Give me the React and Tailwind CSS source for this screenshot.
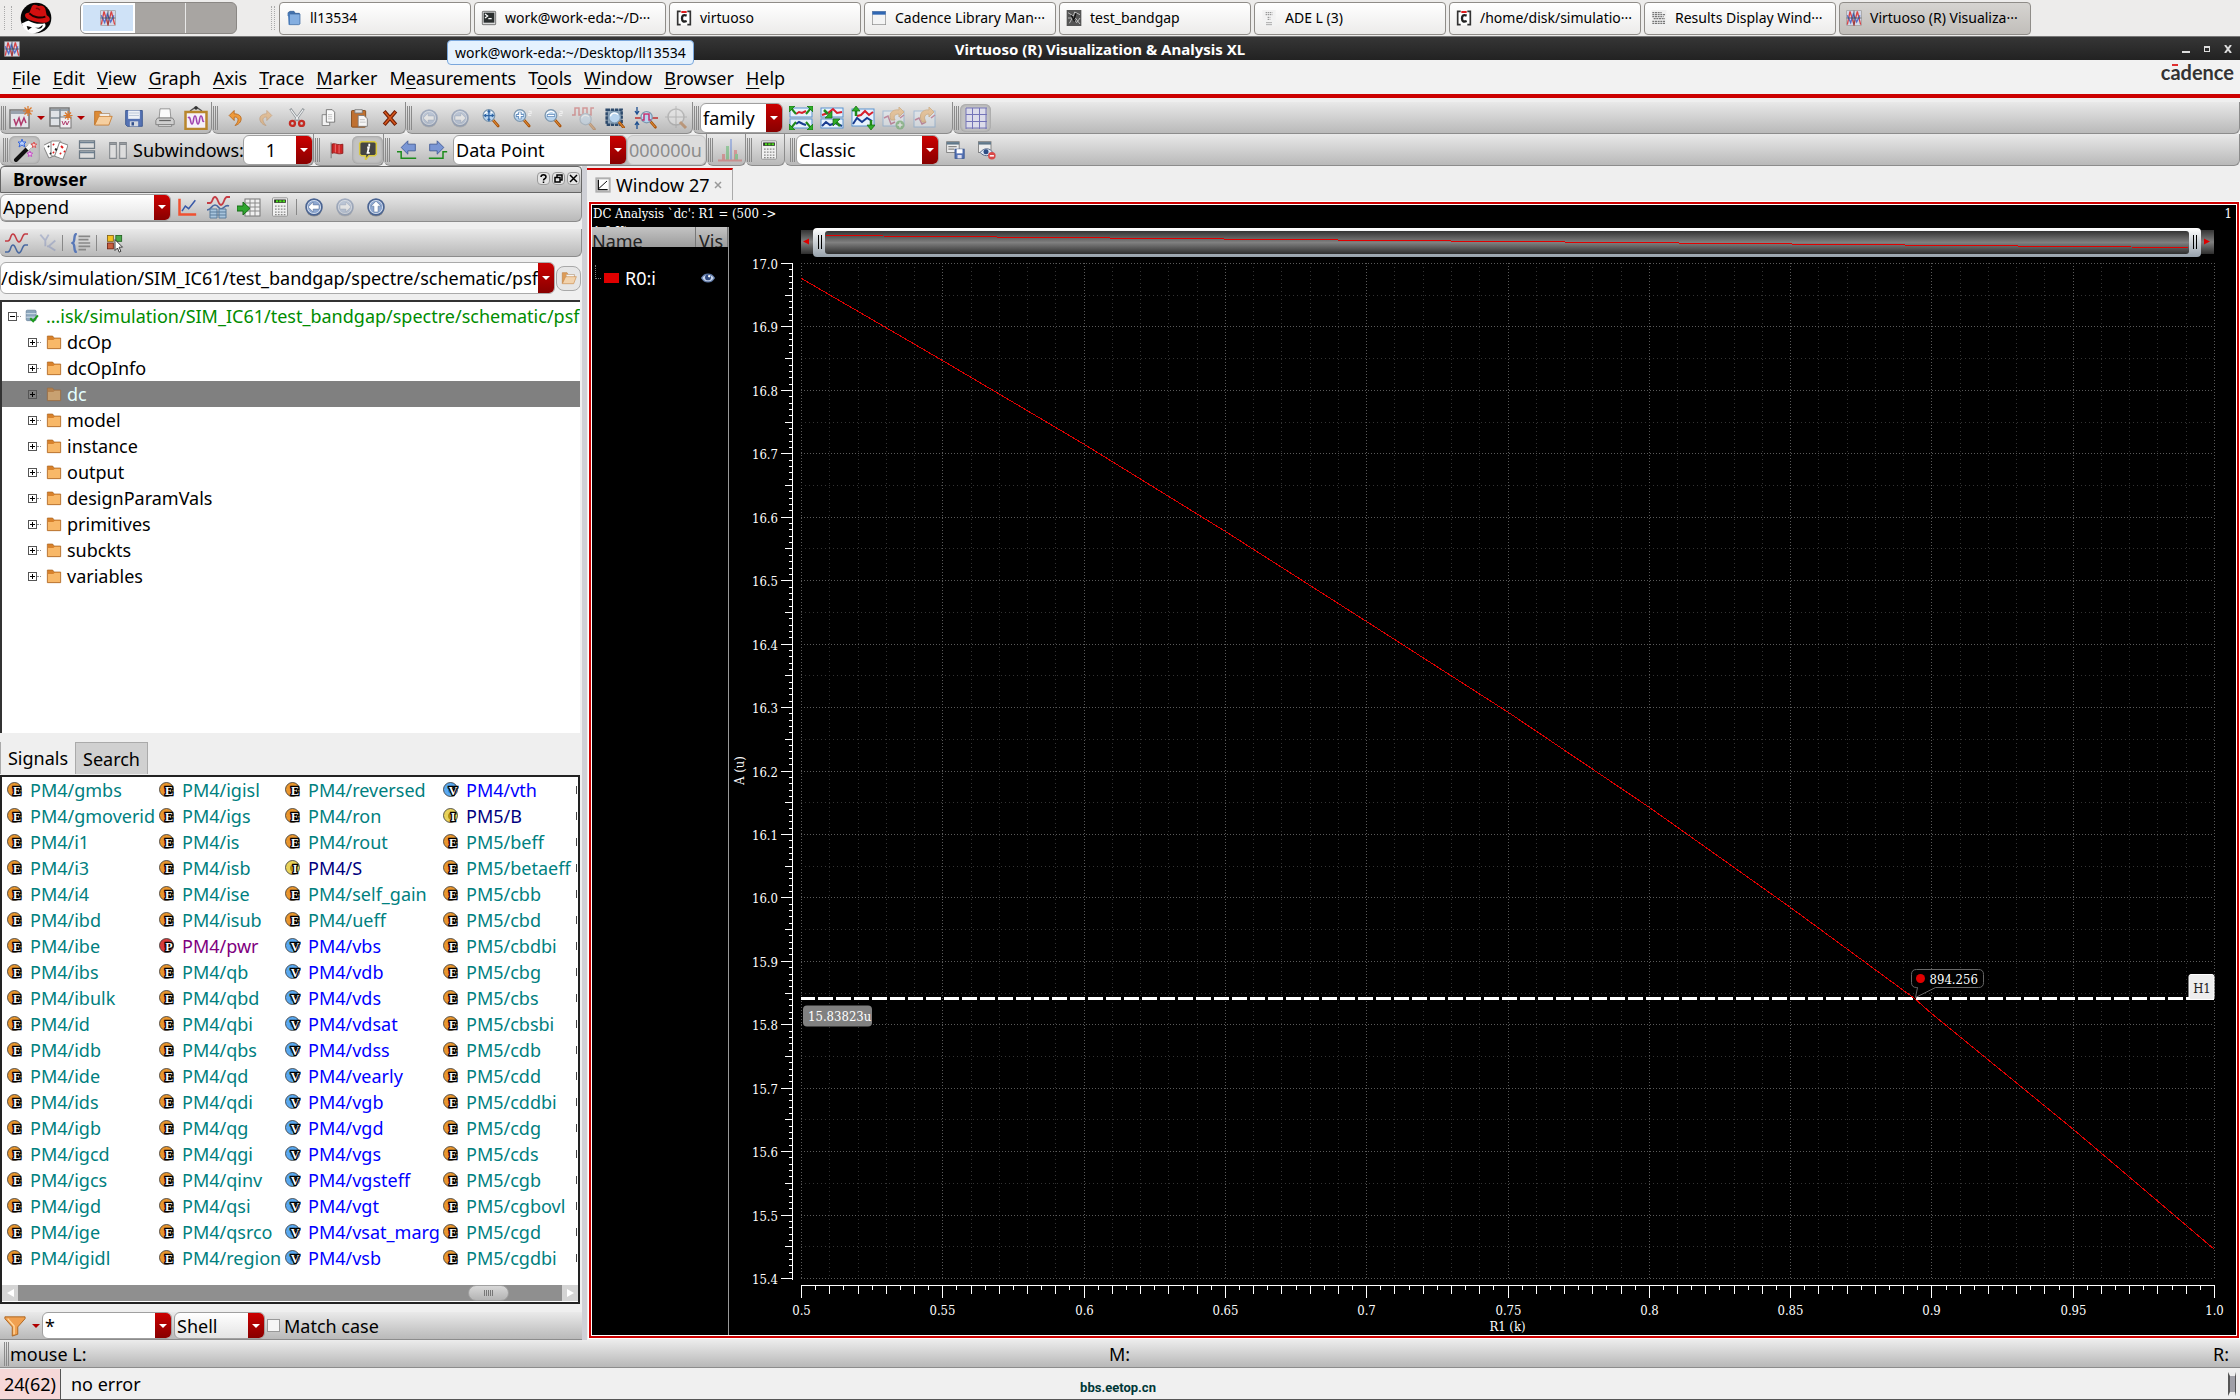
import React, { useEffect, useRef, useState } from 'react';

const tasks = [
  { label: 'll13534', icon: 'folderBlue' },
  { label: 'work@work-eda:~/D···', icon: 'terminal' },
  { label: 'virtuoso', icon: 'cad' },
  { label: 'Cadence Library Man···', icon: 'window' },
  { label: 'test_bandgap', icon: 'schematic' },
  { label: 'ADE L (3)', icon: 'ade' },
  { label: '/home/disk/simulatio···', icon: 'cad' },
  { label: 'Results Display Wind···', icon: 'results' },
  { label: 'Virtuoso (R) Visualiza···', icon: 'waves', active: true },
];

const menus = [
  ['', 'F', 'ile'],
  ['', 'E', 'dit'],
  ['', 'V', 'iew'],
  ['', 'G', 'raph'],
  ['', 'A', 'xis'],
  ['', 'T', 'race'],
  ['', 'M', 'arker'],
  ['M', 'e', 'asurements'],
  ['T', 'o', 'ols'],
  ['', 'W', 'indow'],
  ['', 'B', 'rowser'],
  ['', 'H', 'elp'],
];

const folders = ['dcOp', 'dcOpInfo', 'dc', 'model', 'instance', 'output', 'designParamVals', 'primitives', 'subckts', 'variables'];

const signalColumns = [
  'E:PM4/gmbs E:PM4/gmoverid E:PM4/i1 E:PM4/i3 E:PM4/i4 E:PM4/ibd E:PM4/ibe E:PM4/ibs E:PM4/ibulk E:PM4/id E:PM4/idb E:PM4/ide E:PM4/ids E:PM4/igb E:PM4/igcd E:PM4/igcs E:PM4/igd E:PM4/ige E:PM4/igidl',
  'E:PM4/igisl E:PM4/igs E:PM4/is E:PM4/isb E:PM4/ise E:PM4/isub P:PM4/pwr E:PM4/qb E:PM4/qbd E:PM4/qbi E:PM4/qbs E:PM4/qd E:PM4/qdi E:PM4/qg E:PM4/qgi E:PM4/qinv E:PM4/qsi E:PM4/qsrco E:PM4/region',
  'E:PM4/reversed E:PM4/ron E:PM4/rout I:PM4/S E:PM4/self_gain E:PM4/ueff V:PM4/vbs V:PM4/vdb V:PM4/vds V:PM4/vdsat V:PM4/vdss V:PM4/vearly V:PM4/vgb V:PM4/vgd V:PM4/vgs V:PM4/vgsteff V:PM4/vgt V:PM4/vsat_marg V:PM4/vsb',
  'V:PM4/vth I:PM5/B E:PM5/beff E:PM5/betaeff E:PM5/cbb E:PM5/cbd E:PM5/cbdbi E:PM5/cbg E:PM5/cbs E:PM5/cbsbi E:PM5/cdb E:PM5/cdd E:PM5/cddbi E:PM5/cdg E:PM5/cds E:PM5/cgb E:PM5/cgbovl E:PM5/cgd E:PM5/cgdbi',
].map((column) => column.split(' ').map((item) => item.split(':')));

const signalStyles = {
  E: { text: 'text-[#008080]', ball: '#e8962e', core: '#b8330a' },
  V: { text: 'text-[#0000ff]', ball: '#5aa9f0', core: '#2878d0' },
  I: { text: 'text-[#000080]', ball: '#e8d25a', core: '#b09010' },
  P: { text: 'text-[#800080]', ball: '#d83c3c', core: '#8c0c0c' },
};

// R0:i trace, R1 in k against current in uA
const trace = [
  [0.5, 16.976], [0.55, 16.847], [0.6, 16.714], [0.65, 16.578], [0.7, 16.436], [0.75, 16.292],
  [0.8, 16.143], [0.85, 15.985], [0.894, 15.841], [0.9, 15.818], [0.95, 15.635], [1.0, 15.446],
];

const magnifier = (
  <>
    <path d="M14 14l6.500 7.500" stroke="#a8520c" strokeWidth="3.500" strokeLinecap="round" />
    <path d="M14.500 14.500l5.500 6.500" stroke="#e89a40" strokeWidth="1.200" strokeLinecap="round" />
    <circle cx="9.500" cy="9" r="7" fill="#b8d4ee" stroke="#7d97ae" strokeWidth="1.500" />
    <path d="M4.500 8a5 4.500 0 0 1 9-2" stroke="#fff" strokeWidth="1.500" />
  </>
);

const plots = (
  <>
    <rect x="1" y="2" width="22" height="9" fill="#e8f2fc" stroke="#5b93d0" />
    <rect x="1" y="13" width="22" height="9" fill="#e8f2fc" stroke="#5b93d0" />
  </>
);

const circleArrow = (d) => (
  <>
    <ellipse cx="12" cy="13.500" rx="10" ry="10" fill="#333" opacity=".35" />
    <circle cx="12" cy="12" r="9.500" fill="#dde6f4" stroke="#4a6492" strokeWidth="2" />
    <circle cx="12" cy="12" r="7.500" fill="#8fa8d0" />
    <path d={d} fill="#fff" stroke="#51698f" strokeWidth=".6" />
  </>
);

const leftArrow = 'M5 12l6-6v3.500h7v5h-7V18z';
const rightArrow = 'M19 12l-6-6v3.500H6v5h7V18z';
const upArrow = 'M12 5l6 6h-3.500v7h-5v-7H6z';

const icons = {
  folderBlue: (
    <>
      <path d="M3 4l3-2h6l2 3h6v4H3z" fill="#4372ad" stroke="#2f5a92" />
      <path d="M5 6h16v15l-2 1H5z" fill="#84aee0" stroke="#33619c" />
      <path d="M3 5h3v17H4z" fill="#4b7cba" />
    </>
  ),
  terminal: (
    <>
      <rect x="2" y="2" width="20" height="20" rx="1" fill="#ddd" stroke="#444" />
      <rect x="4" y="4" width="16" height="15" fill="#2c3030" />
      <path d="M6 6l4 3-4 3M11 13h5" stroke="#fff" strokeWidth="1.800" />
    </>
  ),
  cad: (
    <>
      <rect x="4" y="2" width="16" height="20" fill="#fff" />
      <path d="M7 2H2.500v20H7M17 2h4.500v20H17" stroke="#333" strokeWidth="2.500" />
      <path d="M8 3h8" stroke="#e02020" strokeWidth="3" />
      <path d="M16 8.500c-5-2-7 0-7 4s2 6 7 4" stroke="#222" strokeWidth="3.500" />
    </>
  ),
  window: (
    <>
      <rect x="2" y="2" width="20" height="20" fill="#f4f4f4" stroke="#888" />
      <rect x="2" y="2" width="20" height="5" fill="#3067b3" />
    </>
  ),
  schematic: (
    <>
      <rect x="1" y="0" width="22" height="24" fill="#555" />
      <path d="M3 4l8 5 2-6 8 4M5 20l5-9 6 8 5-7M3 12h6M14 12l7 9" stroke="#bbb" strokeWidth="1.500" />
      <path d="M8 8l5 9M15 5l-3 9" stroke="#111" strokeWidth="2" />
    </>
  ),
  ade: (
    <>
      <rect x="2" y="0" width="20" height="24" fill="#f2f2f2" />
      <path d="M7 4h10M7 7h10M10 11h4M10 14h4M8 19h8M8 22h8" stroke="#888" strokeWidth="1.500" strokeDasharray="2 1" />
    </>
  ),
  results: (
    <>
      <rect x="1" y="0" width="22" height="24" fill="#f0f0f0" />
      <path d="M2 4h14M2 7h19M2 10h17M4 13h17M2 17h20M2 20h19" stroke="#777" strokeWidth="1.700" strokeDasharray="3 1" />
    </>
  ),
  waves: (
    <>
      <rect x="1" y="1" width="22" height="22" fill="#d4d9e8" stroke="#999" />
      <path d="M2 22l4-20 6 20 5-20 5 20" stroke="#d84444" strokeWidth="2" />
      <path d="M2 8l5 11 4-13 5 12 5-10" stroke="#5470c8" strokeWidth="2" />
      <path d="M12 1v22M1 12h22" stroke="#333" />
    </>
  ),
  newPlot: (
    <>
      <rect x="1" y="4" width="19" height="18" fill="#e4e6ea" stroke="#777" strokeWidth="1.500" />
      <path d="M2 6.500h17" stroke="#9aa3ae" strokeWidth="3" />
      <path d="M5 13l2 6 3-7 2 7 3-7 2 5" stroke="#b03a6c" strokeWidth="1.500" />
      <path d="M19 0v10M14 5h10M15.500 1.500l7 7M22.500 1.500l-7 7" stroke="#d9772a" strokeWidth="1.200" />
    </>
  ),
  newSub: (
    <>
      <rect x="1" y="2" width="19" height="18" fill="#dfe2e6" stroke="#777" strokeWidth="1.500" />
      <path d="M1 4h19M1 12h11M11 3v17" stroke="#808a94" strokeWidth="1.600" />
      <rect x="11" y="11" width="11" height="11" fill="#f2eef2" stroke="#777" />
      <path d="M13 15l1.500 4 2-4 1.500 4 2-4" stroke="#b03a6c" />
      <path d="M19 5v9M14.500 9.500h9M16 6.500l6 6M22 6.500l-6 6" stroke="#d9772a" strokeWidth="1.200" />
    </>
  ),
  open: (
    <>
      <path d="M2 20V4h7l2 3h9v4H8z" fill="#dd8a34" stroke="#b86a1e" />
      <path d="M8 7h12v8H8z" fill="#fff" stroke="#999" strokeWidth=".6" />
      <path d="M2 20.500L7 10h16l-4 10.500z" fill="#f6cfa0" stroke="#c67a2c" />
    </>
  ),
  save: (
    <>
      <path d="M2 3h20v19H4l-2-2z" fill="#5673b4" stroke="#33508c" />
      <rect x="5" y="3" width="14" height="10" fill="#eef1f6" />
      <path d="M6 6h12M6 9h12" stroke="#b5c0d4" />
      <rect x="7" y="16" width="10" height="6" fill="#d4d8e0" />
      <rect x="9" y="17" width="3" height="4" fill="#33508c" />
    </>
  ),
  print: (
    <>
      <path d="M6 1h12l1 11H5z" fill="#fafafa" stroke="#888" />
      <path d="M3 12h18l2 3v5H1v-5z" fill="#cfcfcf" stroke="#777" />
      <path d="M4 20h16v2H4z" fill="#eee" stroke="#777" />
      <path d="M5 15h14" stroke="#666" strokeWidth="1.500" />
    </>
  ),
  frame: (
    <>
      <path d="M6 5l6-4 6 4" stroke="#555" strokeWidth="1.500" />
      <circle cx="12" cy="2" r="1.800" fill="#333" />
      <rect x="1.500" y="6" width="21" height="17" fill="#f6f0f8" stroke="#b8862c" strokeWidth="2.500" />
      <path d="M4 12c3-3 2 6 4 6s1-8 3-8 1 8 3 8 1-8 3-8 1 7 3 5" stroke="#a044b0" strokeWidth="1.600" />
    </>
  ),
  undo: <path d="M11 3L5 9l6 6v-4c6-1 6 5 1 10 9-2 11-14-1-14z" fill="#ee9a3c" stroke="#b4651a" />,
  redo: <path d="M13 3l6 6-6 6v-4c-6-1-6 5-1 10-9-2-11-14 1-14z" fill="#ee9a3c" stroke="#b4651a" />,
  cut: (
    <>
      <path d="M4 1l10 14M20 1L10 15" stroke="#8a9094" strokeWidth="3" />
      <path d="M4.500 2l9 12M19.500 2l-9 12" stroke="#f0f2f4" strokeWidth="1.300" />
      <circle cx="6.500" cy="18.500" r="3" stroke="#c42c24" strokeWidth="2.800" />
      <circle cx="17.500" cy="18.500" r="3" stroke="#c42c24" strokeWidth="2.800" />
    </>
  ),
  copy: (
    <>
      <path d="M5 8h9v13H5z" fill="#f2f2f2" stroke="#777" />
      <path d="M10 2h7l3 3v12H10z" fill="#fafafa" stroke="#666" />
      <path d="M12 8h5M12 10.500h5M12 13h5" stroke="#bbb" />
    </>
  ),
  paste: (
    <>
      <rect x="3" y="3" width="17" height="20" rx="1" fill="#bf7030" stroke="#7d4312" />
      <path d="M7 6V2h9v4z" fill="#ddd" stroke="#777" />
      <path d="M11 9h7l4 4v9H11z" fill="#f6f6f6" stroke="#777" />
      <path d="M13 14h6M13 17h7" stroke="#bbb" />
    </>
  ),
  remove: (
    <>
      <path d="M5 4l14 16M19 4L5 20" stroke="#6e1c04" strokeWidth="4.500" />
      <path d="M5.500 4.500l13 15M18.500 4.500l-13 15" stroke="#d4561c" strokeWidth="2" />
    </>
  ),
  back: circleArrow(leftArrow),
  forward: circleArrow(rightArrow),
  up: circleArrow(upArrow),
  zoomFit: (
    <>
      {magnifier}
      <path d="M9.500 3.500v11M4 9h11M8 5l1.500-2L11 5M8 13l1.500 2 1.500-2M6 7.500L4 9l2 1.500M13 7.500L15 9l-2 1.500" stroke="#2e64a4" strokeWidth="1.500" />
    </>
  ),
  zoomIn: (
    <>
      {magnifier}
      <path d="M9.500 4.500v9M5 9h9" stroke="#3c6ea8" strokeWidth="3.500" />
      <path d="M9.500 5v8M5.500 9h8" stroke="#fff" strokeWidth="2" />
      <path d="M20 4h3v2.500h-3V9h3" stroke="#eee" strokeWidth="1.300" />
    </>
  ),
  zoomOut: (
    <>
      {magnifier}
      <path d="M5 9h9" stroke="#3c6ea8" strokeWidth="3.500" />
      <path d="M5.500 9h8" stroke="#fff" strokeWidth="2" />
      <path d="M20 4h3v2.500h-3V9h3" stroke="#eee" strokeWidth="1.300" />
    </>
  ),
  zoomWave: (
    <>
      <path d="M0 9h3V2h4v7h4V2h4v7h4V2h3" stroke="#c03030" strokeWidth="1.500" />
      <g transform="translate(6 6) scale(.8)">{magnifier}</g>
    </>
  ),
  zoomArea: (
    <>
      <rect x="2" y="2" width="18" height="18" fill="#8fa4b8" stroke="#2d4a6c" strokeWidth="3" strokeDasharray="4 1" />
      <g transform="translate(2 2)">{magnifier}</g>
    </>
  ),
  zoomTrace: (
    <>
      <path d="M3 1v7M3 23v-7M1 5l2 3 2-3M1 19l2-3 2 3" stroke="#1d4f90" strokeWidth="1.300" />
      <path d="M1 12h7M18 12h6" stroke="#c03030" strokeWidth="1.500" />
      <g transform="translate(5 4) scale(.8)">{magnifier}</g>
      <path d="M8 14h2V8h5v6h2" stroke="#c03070" strokeWidth="1.500" />
    </>
  ),
  zoomTarget: (
    <>
      <circle cx="11" cy="11" r="8" fill="#eee" stroke="#888" strokeWidth="1.500" />
      <path d="M11 0v22M0 11h22" stroke="#888" />
      <path d="M15 16l6 6" stroke="#a8520c" strokeWidth="3" />
    </>
  ),
  expandPlots: (
    <>
      {plots}
      <path d="M7 8l3-2 3 1 4-2" stroke="#d8202c" strokeWidth="2" />
      <path d="M7 18l3-2 4 2 3 1" stroke="#183c90" strokeWidth="2" />
      <path d="M2 2l5 6M22 2l-5 6M2 22l5-6M22 22l-5-6" stroke="#1f8a1a" strokeWidth="2" />
      <path d="M0 0h6L0 6zM24 0h-6l6 6zM0 24h6l-6-6zM24 24h-6l6-6z" fill="#2fae28" stroke="#146c10" strokeWidth=".7" />
    </>
  ),
  shrinkPlots: (
    <>
      {plots}
      <path d="M2 9l6-2 5-4 4 4 5-1" stroke="#d8202c" strokeWidth="2" />
      <path d="M2 20l4-4 4 3 5-2 7 3" stroke="#183c90" strokeWidth="2" />
      <path d="M4 4l4 4M20 20l-4-4" stroke="#1f8a1a" strokeWidth="2.500" />
      <path d="M12 12H5l7-7zM13 13h7l-7 7z" fill="#2fae28" stroke="#146c10" strokeWidth=".7" />
    </>
  ),
  spreadPlots: (
    <>
      <rect x="1" y="3" width="22" height="17" fill="#e8f2fc" stroke="#5b93d0" />
      <path d="M6 10l4-1 4-4 4 4 4-3" stroke="#d8202c" strokeWidth="2" />
      <path d="M2 18l4-6 5 4 5-4 5 3" stroke="#183c90" strokeWidth="2" />
      <path d="M5 10V3M20 14v7" stroke="#1f8a1a" strokeWidth="2.500" />
      <path d="M5 0l4 5H1zM20 24l4-5h-8z" fill="#2fae28" stroke="#146c10" strokeWidth=".7" />
    </>
  ),
  reloadAdd: (
    <>
      <rect x="1" y="5" width="21" height="15" fill="#e8f2fc" stroke="#5b93d0" />
      <path d="M2 12l4-2 3 8 4-2M18 12l4-3" stroke="#a02050" strokeWidth="1.500" />
      <path d="M9 14c-3-6 1-11 8-10V1l5 5-5 5V8c-4 0-6 2-4 6z" fill="#f0a040" stroke="#c07820" />
      <circle cx="18" cy="19" r="4.500" fill="#3f9a3a" />
      <path d="M18 16.500v5M15.500 19h5" stroke="#fff" strokeWidth="1.500" />
    </>
  ),
  reload: (
    <>
      <rect x="1" y="5" width="21" height="16" fill="#e8f2fc" stroke="#5b93d0" />
      <path d="M2 14l4-2 3 6 4-2M18 12l4-3" stroke="#a02050" strokeWidth="1.500" />
      <path d="M9 16c-4-7 0-13 7-12V1l5 5-5 5V8c-4 0-6 3-3 8z" fill="#f0a040" stroke="#c07820" />
    </>
  ),
  grid: (
    <>
      <rect x="2" y="2" width="20" height="20" fill="#dcdcea" />
      <path d="M2 2v21M8.500 2v21M15.500 2v21M22 2v21M2 2h21M2 8.500h21M2 15.500h21M2 22h21" stroke="#7474b8" />
    </>
  ),
  wand: (
    <>
      <path d="M3 22L16 9" stroke="#111" strokeWidth="4" strokeLinecap="round" />
      <path d="M14 11l4-4" stroke="#f4f4f4" strokeWidth="4" />
      <path d="M9 1l1 3h3l-2 2 1 3-3-2-3 2 1-3-2-2h3z" fill="#b8d0ff" stroke="#3a68d8" />
      <path d="M21 4l.7 2h2l-1.500 1.500.5 2-1.700-1-1.700 1 .5-2L18 6h2z" fill="#ffd0d0" stroke="#d83838" strokeWidth=".8" />
      <path d="M17 13l.7 2h2l-1.500 1.500.5 2-1.700-1-1.700 1 .5-2L14 15h2z" fill="#f8c8f8" stroke="#c038c0" strokeWidth=".8" />
    </>
  ),
  cards: (
    <>
      <rect x="2" y="5" width="9" height="14" rx="1" fill="#fff" stroke="#888" transform="rotate(-25 6 13)" />
      <rect x="7" y="3" width="10" height="15" rx="1" fill="#fff" stroke="#888" />
      <rect x="13" y="5" width="9" height="15" rx="1" fill="#fff" stroke="#888" transform="rotate(20 17 12)" />
      <path d="M4 8l1 1M11 11l2 1M6 15l1 1" stroke="#222" strokeWidth="2" />
      <path d="M9 6l1 1M17 8l2 2M16 15l1 1M20 13l1 1M9 14l1 1" stroke="#e02020" strokeWidth="2" />
    </>
  ),
  rows: (
    <>
      <path d="M3 1h18v9H3zM3 13h18v9H3z" fill="#ddd" stroke="#6e7a84" strokeWidth="1.500" />
      <path d="M3 3h18M3 15h18" stroke="#6d7f90" strokeWidth="2" />
    </>
  ),
  columns: (
    <>
      <path d="M2 3h8v19H2zM14 3h8v19h-8z" fill="#ddd" stroke="#84898e" strokeWidth="1.300" />
      <path d="M2 5h8M14 5h8" stroke="#84898e" strokeWidth="2" />
    </>
  ),
  flag: (
    <>
      <path d="M5 3v19" stroke="#888" strokeWidth="1.500" />
      <path d="M6 5c4-2 6 2 13 0v11c-7 2-9-2-13 0z" fill="#cc2626" stroke="#8c1212" />
      <path d="M10 5v10M14.500 6v10" stroke="#f08080" />
    </>
  ),
  info: (
    <>
      <path d="M4 2h16l2 2v13l-2 2h-7l-4 5v-5H4l-2-2V4z" fill="#444" stroke="#d8c840" strokeWidth="1.800" />
      <path d="M13.500 4.500v3M11 9h2l-1.500 6.500H14" stroke="#fff" strokeWidth="2.200" />
    </>
  ),
  prevEdge: (
    <>
      <path d="M5 9l8-8v4h9v8h-9v4z" fill="#7a96d4" stroke="#3c5794" />
      <path d="M0 14h5v8h18" stroke="#1c8c1c" strokeWidth="1.800" />
    </>
  ),
  nextEdge: (
    <>
      <path d="M19 9l-8-8v4H2v8h9v4z" fill="#7a96d4" stroke="#3c5794" />
      <path d="M1 22h17v-8h5" stroke="#1c8c1c" strokeWidth="1.800" />
    </>
  ),
  histogram: (
    <>
      <path d="M4 22v-6h3v6zM16 22V12h3v10z" fill="#d84848" />
      <path d="M8 22V8h3v14zM17 22v-6h3v6z" fill="#38b048" />
      <path d="M12 22V1h2v21z" fill="#5078d8" />
      <path d="M0 22.500h24" stroke="#d84848" strokeWidth="2" />
    </>
  ),
  calculator: (
    <>
      <rect x="3" y="1" width="18" height="22" rx="1" fill="#f0f0f0" stroke="#888" />
      <rect x="5" y="3" width="14" height="4" fill="#222" />
      <path d="M7 5h11" stroke="#4be01a" strokeWidth="2.500" strokeDasharray="3 1" />
      <path d="M6 11h13M6 14.500h13M6 18h13M6 21h13" stroke="#888" strokeWidth="1.500" strokeDasharray="2 1.500" />
    </>
  ),
  saveView: (
    <>
      <rect x="2" y="2" width="15" height="13" fill="#eee" stroke="#777" />
      <path d="M2 4h15" stroke="#60788a" strokeWidth="3" />
      <path d="M4 8h10M4 11h7" stroke="#888" strokeWidth="1.500" />
      <rect x="12" y="11" width="11" height="11" fill="#5673b4" stroke="#33508c" />
      <rect x="14" y="11" width="7" height="5" fill="#fff" />
      <rect x="15" y="18" width="5" height="4" fill="#dde" />
    </>
  ),
  hideView: (
    <>
      <rect x="3" y="2" width="15" height="13" fill="#eee" stroke="#777" />
      <path d="M3 4h15" stroke="#60788a" strokeWidth="3" />
      <path d="M5 15c4-6 12-6 15 0-4 5-11 5-15 0z" fill="#dfe8f4" stroke="#445a7c" />
      <circle cx="12" cy="14" r="3" fill="#2c4c84" />
      <circle cx="19" cy="19" r="4.500" fill="#d84848" />
      <path d="M16.500 19h5" stroke="#fff" strokeWidth="1.800" />
    </>
  ),
  lineChart: (
    <>
      <path d="M3 2v19h20" stroke="#f05030" strokeWidth="3" />
      <path d="M6 17l4-6 4 3 8-10" stroke="#3858a8" strokeWidth="1.800" />
    </>
  ),
  waveData: (
    <>
      <path d="M1 8h3c3 0 2-6 5-6s3 8 6 8 3-8 6-8h3" stroke="#c43c44" strokeWidth="1.800" />
      <path d="M1 15c5 0 4-5 8-5s3 4 6 4 4-5 8-3" stroke="#4868a0" strokeWidth="1.600" />
      <path d="M4 14h7v9H4zM13 14h7v9h-7z" fill="#a8c4dc" stroke="#5b7c9c" />
      <path d="M4 17h16M4 20h16" stroke="#5b7c9c" />
    </>
  ),
  toTable: (
    <>
      <rect x="8" y="4" width="15" height="17" fill="#f0f0f0" stroke="#777" />
      <path d="M8 8h15M8 12h15M8 16h15M13 4v17M18 4v17" stroke="#8a8a8a" />
      <path d="M0 11h6V7l7 6.500L6 20v-4H0z" fill="#2fa52f" stroke="#166c16" />
    </>
  ),
  twoWaves: (
    <>
      <path d="M1 10h3c3 0 2-7 5-7s3 8 6 8 3-8 6-8h3" stroke="#c43c44" strokeWidth="1.500" />
      <path d="M1 21h3c3 0 2-7 5-7s3 8 6 8 3-8 6-8h3" stroke="#4868a0" strokeWidth="1.500" />
    </>
  ),
  branch: <path d="M4 2l6 7 4-7M10 9v7M22 9l-8 7 8 5M14 16h-2" stroke="#7484b8" strokeWidth="2.200" />,
  braces: (
    <>
      <path d="M7 1C2 1 6 10 2 12c4 2 0 11 5 11" stroke="#5878b8" strokeWidth="2.800" />
      <path d="M9 4h14M9 8h12M9 12h14M9 16h14M9 20h9" stroke="#888" strokeWidth="2" />
    </>
  ),
  pick: (
    <>
      <rect x="3" y="3" width="7" height="7" fill="#f4c020" stroke="#806010" />
      <rect x="13" y="3" width="7" height="7" fill="#48a848" stroke="#206020" />
      <rect x="3" y="12" width="7" height="7" fill="#c86040" stroke="#702010" />
      <path d="M12 8v13l3-3 2 5 2-1-2-5h4z" fill="#fff" stroke="#222" />
    </>
  ),
  funnel: (
    <>
      <path d="M1 2h22v2l-8 9v8l-6 2V13L1 4z" fill="#f0a050" stroke="#a8621c" />
      <path d="M4 4l7 8v9" stroke="#ffd8a0" strokeWidth="1.500" />
    </>
  ),
  folder: (
    <>
      <path d="M2 3h8l2 3h10v16H2z" fill="#d8822c" stroke="#a8601c" />
      <path d="M3 9h8l2-2h8v14H3z" fill="#f8b868" />
    </>
  ),
  database: (
    <>
      <rect x="2" y="2" width="17" height="18" rx="2" fill="#8ba6bc" stroke="#54708a" />
      <path d="M2 8h17M2 14h17" stroke="#dce8f0" strokeWidth="1.500" />
      <path d="M9 16l5 5 8-10" stroke="#1c9a1c" strokeWidth="3.500" />
    </>
  ),
  eye: (
    <>
      <path d="M1 12c5-9 17-9 22 0-5 9-17 9-22 0z" fill="#c8d6ec" stroke="#5c76a4" strokeWidth="2" />
      <circle cx="12" cy="11" r="5" fill="#304a80" />
      <circle cx="14" cy="9" r="2" fill="#fff" />
    </>
  ),
  graphWindow: (
    <>
      <rect x="2" y="2" width="20" height="20" fill="#fff" stroke="#b0b0b0" strokeWidth="3" />
      <path d="M5 4v15h14" stroke="#111" strokeWidth="2" />
      <path d="M6 17L18 6" stroke="#111" strokeWidth="1.500" />
    </>
  ),
  redhat: (
    <>
      <circle cx="12" cy="12" r="11.500" fill="#050505" />
      <path d="M1.500 16c2-1 4-2 5-2 3 2 8 3 12 2 1 1 1 3-1 4-3 3-8 4-10 3-3-1-6-4-6-7z" fill="#fff" />
      <path d="M5 18l4 1-3 2zM11 19c3 1 4 0 6-2 0 3-3 4-6 2z" fill="#050505" />
      <path d="M4 11c-1-3 2-3 3-3l2-5c2-2 4 0 5 0 2-1 4 0 5 2l1 5c4 2 3 6-3 5.500C12 15 5 13.500 4 11z" fill="#d20f0f" />
      <path d="M7 8.500c3 3 8 4 12 2.500" stroke="#1a0202" strokeWidth="1.500" />
      <path d="M12 5c1-1 2 0 3 1" stroke="#7a0606" />
    </>
  ),
};

function Icon({ name, className = 'size-6' }) {
  return (
    <svg viewBox="0 0 24 24" fill="none" className={`shrink-0 ${className}`} aria-hidden="true">
      {icons[name]}
    </svg>
  );
}

const Grip = () => (
  <span className="flex h-6 w-[7px] shrink-0 items-stretch justify-center gap-px">
    <i className="w-px bg-[#8a8a8a]" />
    <i className="w-px bg-[#8a8a8a]" />
    <i className="w-px bg-[#8a8a8a]" />
  </span>
);

const Group = ({ children, className = 'h-8' }) => (
  <div className={`flex items-center rounded-b-md border-r border-b border-[#8c8c8c] bg-linear-to-b from-[#e9e9e9] to-[#b9b9b9] ${className}`}>
    {children}
  </div>
);

const Tool = ({ icon, dim, pressed, large, width = 'w-[31px]' }) => (
  <button
    type="button"
    aria-label={icon}
    disabled={dim}
    className={`flex h-7 shrink-0 items-center justify-center rounded-md ${width} ${pressed ? 'bg-[#c2c2c2] shadow-[inset_0_0_3px_#8c8c8c]' : ''}`}
  >
    <Icon name={icon} className={`${large ? 'size-6' : 'size-5'} ${dim ? 'opacity-40' : ''}`} />
  </button>
);

const MenuArrow = () => (
  <button type="button" aria-label="More" className="flex h-7 w-3 shrink-0 items-center justify-center">
    <span className="border-x-4 border-t-4 border-x-transparent border-t-[#b00000]" />
  </button>
);

const RedArrow = () => (
  <span className="flex w-4 shrink-0 items-center justify-center bg-linear-to-b from-[#cc0000] to-[#880000]">
    <span className="border-x-4 border-t-4 border-x-transparent border-t-white" />
  </span>
);

const Combo = ({ value, label, className = '', center, plain }) => (
  <label className={`flex shrink-0 overflow-hidden rounded-md border border-[#a0a0a0] ${plain ? 'bg-linear-to-b from-white to-[#e4e4e4]' : 'bg-white'} ${className}`}>
    <select aria-label={label} className={`min-w-0 flex-1 appearance-none pl-0.5 outline-none ${center ? 'text-center' : ''}`}>
      <option>{value}</option>
    </select>
    <RedArrow />
  </label>
);

function Taskbar() {
  return (
    <nav className="flex h-9 items-center bg-[#edeceb] text-[14px]">
      <span className="ml-1 h-6 w-2 border-x border-dotted border-[#aaa]" />
      <button type="button" aria-label="Applications" className="mr-7 ml-2 flex w-8">
        <Icon name="redhat" className="size-8" />
      </button>
      <div className="flex h-8 w-[157px] overflow-hidden rounded-md border border-[#8a8784] bg-[#a8a5a2]">
        <button type="button" aria-label="Workspace 1" className="flex flex-1 items-center justify-center border-2 border-white bg-[#cfe2f7]">
          <Icon name="waves" className="size-4" />
        </button>
        <button type="button" aria-label="Workspace 2" className="flex-1 border-r border-[#e8e8e8]" />
        <button type="button" aria-label="Workspace 3" className="flex-1" />
      </div>
      <span className="mr-1 ml-[34px] h-6 w-1 border-x border-dotted border-[#aaa]" />
      <div className="flex gap-[3px]">
        {tasks.map((task) => (
          <button
            key={task.label}
            type="button"
            className={`flex h-[33px] w-48 items-center gap-2 rounded border border-[#8f8c88] pl-1.5 whitespace-nowrap ${
              task.active ? 'bg-linear-to-b from-[#d6d4d1] to-[#c1beba]' : 'bg-linear-to-b from-white to-[#ecebea]'
            }`}
          >
            <Icon name={task.icon} className="size-4" />
            {task.label}
          </button>
        ))}
      </div>
    </nav>
  );
}

function TitleBar() {
  return (
    <div className="relative flex h-6 items-center border-t border-[#777] bg-linear-to-b from-[#363636] to-[#222] text-white">
      <span className="flex w-6 justify-center">
        <Icon name="waves" className="size-4" />
      </span>
      <h1 className="flex-1 text-center text-[15px] leading-5 font-bold">Virtuoso (R) Visualization &amp; Analysis XL</h1>
      <div className="flex w-16 items-center gap-3.5 pl-[6px]">
        <button type="button" aria-label="Minimize" className="h-2 w-2 border-b-2 border-[#ddd]" />
        <button type="button" aria-label="Maximize" className="size-1.5 border border-t-2 border-[#ddd]" />
        <button type="button" aria-label="Close" className="flex">
          <svg viewBox="0 0 8 8" className="size-2">
            <path d="M1 0l6 8M7 0L1 8" stroke="#ddd" strokeWidth="2" />
          </svg>
        </button>
      </div>
      <div className="absolute top-[3px] left-[447px] z-10 flex h-[25px] items-center rounded border border-[#7aa7dc] bg-[#e5f2fe] px-[7px] text-[14px] text-black">
        work@work-eda:~/Desktop/ll13534
      </div>
    </div>
  );
}

function MenuBar() {
  return (
    <div className="flex h-[38px] items-start justify-between border-b-4 border-[#cc0000] bg-[#f2f2f2]">
      <div className="flex gap-3 pt-1.5 pl-3">
        {menus.map(([before, key, after]) => (
          <button key={key + after} type="button" className="leading-6">
            {before}
            <span className="underline underline-offset-3">{key}</span>
            {after}
          </button>
        ))}
      </div>
      <div className="pt-0.5 pr-[6px] font-['Lato',sans-serif] text-[20px] leading-5 font-bold text-[#333]">
        c
        <span className="relative">
          a<i className="absolute top-[4px] left-[2px] h-0.5 w-1.5 bg-[#e03030]" />
        </span>
        dence
      </div>
    </div>
  );
}

function Toolbars() {
  return (
    <div className="pt-1">
      <div className="flex">
        <Group>
          <Grip />
          <Tool icon="newPlot" width="w-7" large />
          <MenuArrow />
          <Tool icon="newSub" width="w-7" large />
          <MenuArrow />
          <Tool icon="open" />
          <Tool icon="save" />
          <Tool icon="print" />
          <Tool icon="frame" large />
        </Group>
        <Group>
          <Grip />
          <Tool icon="undo" />
          <Tool icon="redo" dim />
          <Tool icon="cut" />
          <Tool icon="copy" />
          <Tool icon="paste" />
          <Tool icon="remove" />
        </Group>
        <Group>
          <Grip />
          <Tool icon="back" dim />
          <Tool icon="forward" dim />
          <Tool icon="zoomFit" />
          <Tool icon="zoomIn" />
          <Tool icon="zoomOut" />
          <Tool icon="zoomWave" dim large />
          <Tool icon="zoomArea" />
          <Tool icon="zoomTrace" large />
          <Tool icon="zoomTarget" dim large />
        </Group>
        <Group className="h-8 pr-3">
          <Grip />
          <Combo value="family" label="Trace selection" className="mr-0.5 h-[30px] w-[83px]" />
          <Tool icon="expandPlots" large />
          <Tool icon="shrinkPlots" large />
          <Tool icon="spreadPlots" large />
          <Tool icon="reloadAdd" dim large />
          <Tool icon="reload" dim large />
        </Group>
        <Group className="h-8 flex-1">
          <Grip />
          <Tool icon="grid" pressed large />
        </Group>
      </div>
      <div className="flex">
        <Group className="h-8 pl-0.5">
          <Grip />
          <Tool icon="wand" pressed large />
          <Tool icon="cards" large />
          <Tool icon="rows" />
          <Tool icon="columns" />
          <span className="w-[110px]">Subwindows:</span>
          <Combo value="1" label="Subwindows" center className="h-[30px] w-[70px]" />
        </Group>
        <Group>
          <Grip />
          <Tool icon="flag" />
          <Tool icon="info" pressed />
        </Group>
        <Group>
          <Grip />
          <Tool icon="prevEdge" />
          <Tool icon="nextEdge" />
          <Combo value="Data Point" label="Edge type" className="h-[30px] w-[174px]" />
          <input aria-label="Step" disabled defaultValue="000000u" className="h-[30px] w-[79px] rounded-md border border-[#c6c6c6] bg-[#dcdcdc] px-px text-[#8c8c8c]" />
        </Group>
        <Group>
          <Grip />
          <Tool icon="histogram" dim large />
        </Group>
        <Group>
          <Grip />
          <Tool icon="calculator" />
        </Group>
        <Group className="h-8 flex-1 pl-1">
          <Grip />
          <Combo value="Classic" label="Workspace" className="h-[30px] w-[143px]" />
          <Tool icon="saveView" />
          <Tool icon="hideView" />
        </Group>
      </div>
    </div>
  );
}

const Expander = ({ open, onDark }) => (
  <span className={`flex size-[9px] shrink-0 items-center justify-center border border-[#555] ${onDark ? 'bg-transparent' : 'bg-white'}`}>
    <svg viewBox="0 0 5 5" className="size-[5px]" shapeRendering="crispEdges">
      <path d={open ? 'M0 2h5v1H0z' : 'M0 2h5v1H0zM2 0h1v5H2z'} fill="#000" />
    </svg>
  </span>
);

function Tree() {
  return (
    <div className="mr-0.5 min-h-0 flex-1 overflow-hidden border-t-2 border-l-2 border-[#333] bg-white">
      <ul className="pt-px">
        <li className="flex h-[26px] items-center pl-1.5 text-[#008c00]">
          <Expander open />
          <span className="w-1 border-b border-dotted border-[#888]" />
          <Icon name="database" className="ml-1 size-3.5" />
          <span className="ml-[7px] whitespace-nowrap">…isk/simulation/SIM_IC61/test_bandgap/spectre/schematic/psf</span>
        </li>
        {folders.map((name) => (
          <li
            key={name}
            className={`flex h-[26px] items-center pl-[26px] ${name === 'dc' ? 'bg-[#808080] text-[#e4ffff]' : ''}`}
          >
            <Expander onDark={name === 'dc'} />
            <span className="w-1 border-b border-dotted border-[#888]" />
            <Icon name="folder" className={name === 'dc' ? 'ml-[5px] size-4 opacity-60' : 'ml-[5px] size-4'} />
            <span className="ml-[5px]">{name}</span>
          </li>
        ))}
      </ul>
    </div>
  );
}

function SignalIcon({ type }) {
  const { ball, core } = signalStyles[type];
  return (
    <svg viewBox="0 0 16 16" className="size-4 shrink-0" aria-hidden="true">
      <circle cx="7.500" cy="7.500" r="7" fill={ball} stroke="#333" strokeWidth=".8" />
      <circle cx="8.500" cy="8" r="3.500" fill={core} />
      <text x="10" y="13" textAnchor="middle" fontSize="12" fontWeight="bold" fontFamily="Liberation Serif, serif" fill="#fff" stroke="#000" strokeWidth="2.500" paintOrder="stroke">
        {type}
      </text>
    </svg>
  );
}

function Signals() {
  return (
    <div className="mt-2 pt-px">
      <div role="tablist" className="flex h-8">
        <button role="tab" aria-selected="true" type="button" className="w-[75px] border-l border-[#aaa]">Signals</button>
        <button role="tab" aria-selected="false" type="button" className="w-[73px] border border-b-0 border-[#aaa] bg-[#d0d0d0]">Search</button>
      </div>
      <div className="mt-px mr-0.5 border-2 border-[#222] bg-white">
        <div className="grid grid-cols-[152px_126px_158px_133px_1fr] overflow-hidden pl-[5px]">
          {signalColumns.map((column, i) => (
            <ul key={i}>
              {column.map(([type, name]) => (
                <li key={name} className={`flex h-[26px] items-center gap-[7px] whitespace-nowrap ${signalStyles[type].text}`}>
                  <SignalIcon type={type} />
                  {name}
                </li>
              ))}
            </ul>
          ))}
          <ul className="overflow-hidden">
            {signalColumns[0].map(([, name]) => (
              <li key={name} className="flex h-[26px] items-center">
                <span className="h-2 w-px bg-[#444]" />
              </li>
            ))}
          </ul>
        </div>
        <div className="mt-3.5 mb-px flex h-4 bg-[#8f8f8f]">
          <button type="button" aria-label="Scroll left" className="flex w-4 items-center justify-center bg-[#d4d4d4]">
            <span className="border-y-4 border-r-[7px] border-y-transparent border-r-white" />
          </button>
          <div className="flex-1" />
          <div className="flex w-[41px] items-center justify-center gap-px rounded-full border border-[#a0a0a0] bg-linear-to-b from-[#d8d8d8] to-[#b4b4b4]">
            {[1, 2, 3, 4, 5].map((n) => (
              <i key={n} className="h-1.5 w-px bg-[#777]" />
            ))}
          </div>
          <div className="w-[53px]" />
          <button type="button" aria-label="Scroll right" className="flex w-4 items-center justify-center bg-[#d4d4d4]">
            <span className="border-y-4 border-l-[7px] border-y-transparent border-l-white" />
          </button>
        </div>
      </div>
      <div className="mt-2 flex h-[28px] items-center border-b border-[#8c8c8c] bg-linear-to-b from-[#eaeaea] to-[#b9b9b9] pl-1">
        <Icon name="funnel" className="size-[22px]" />
        <span className="w-1" />
        <MenuArrow />
        <Combo value="*" label="Filter" className="h-[27px] w-[130px]" />
        <Combo value="Shell" label="Filter syntax" plain className="ml-0.5 h-[27px] w-[91px]" />
        <label className="flex items-center gap-1 pl-0.5">
          <input type="checkbox" className="size-[13px] appearance-none border border-[#999] bg-[#f6f6f6]" />
          Match case
        </label>
      </div>
    </div>
  );
}

const DockButton = ({ label, children }) => (
  <button type="button" aria-label={label} className="flex h-[13px] w-[13px] items-center justify-center rounded-sm border border-[#999] bg-[#e4e4e4]">
    <svg viewBox="0 0 9 9" className="size-[9px]" fill="none" stroke="#000" strokeWidth="1.500">
      {children}
    </svg>
  </button>
);

function Browser() {
  return (
    <aside className="flex w-[582px] shrink-0 flex-col">
      <div className="flex h-[27px] items-center justify-between rounded-t border border-[#666] bg-linear-to-b from-[#efefef] to-[#b4b4b4] pr-px pb-0.5 pl-[12px]">
        <h2 className="font-bold">Browser</h2>
        <div className="flex gap-0.5">
          <DockButton label="Help"><path d="M2 3c0-3 5-3 5 0 0 2-2.500 1.500-2.500 3.500M4.500 7.500V9" /></DockButton>
          <DockButton label="Float"><path d="M3 3V1h5v5H6M1 3.500h5V8H1z" /></DockButton>
          <DockButton label="Close"><path d="M1 1l7 7M8 1L1 8" /></DockButton>
        </div>
      </div>
      <Group className="h-[29px]">
        <Combo value="Append" label="Plot mode" plain className="h-[27px] w-[171px]" />
        <Tool icon="lineChart" />
        <Tool icon="waveData" large />
        <Tool icon="toTable" large />
        <Tool icon="calculator" />
        <span className="mx-px h-4 w-px bg-[#888]" />
        <Tool icon="back" />
        <Tool icon="forward" dim />
        <Tool icon="up" />
      </Group>
      <Group className="mt-[7px] h-[28px]">
        <Tool icon="twoWaves" large />
        <Tool icon="branch" dim />
        <span className="h-4 w-px bg-[#888]" />
        <span className="w-0.5" />
        <Tool icon="braces" />
        <span className="h-4 w-px bg-[#888]" />
        <span className="w-0.5" />
        <Tool icon="pick" />
      </Group>
      <div className="mt-[5px] mb-[6px] flex h-8 items-center">
        <div className="flex h-8 w-[555px] overflow-hidden rounded-md border border-[#aaa] bg-white">
          <input aria-label="Results path" defaultValue="/disk/simulation/SIM_IC61/test_bandgap/spectre/schematic/psf" className="min-w-0 flex-1 outline-none" />
          <RedArrow />
        </div>
        <button type="button" aria-label="Open results" className="ml-px flex size-[25px] items-center justify-center rounded-lg border border-[#a8a8a8] bg-[#e6e6e6]">
          <Icon name="open" className="size-4 opacity-80" />
        </button>
      </div>
      <Tree />
      <Signals />
    </aside>
  );
}

const margin = { left: 72, right: 22, top: 36, bottom: 57 };

function Chart() {
  const ref = useRef(null);
  const [size, setSize] = useState({ width: 1507, height: 1108 });

  useEffect(() => {
    const observer = new ResizeObserver(([entry]) => {
      setSize({ width: Math.round(entry.contentRect.width), height: Math.round(entry.contentRect.height) });
    });
    observer.observe(ref.current);
    return () => observer.disconnect();
  }, []);

  const { width, height } = size;
  const right = width - margin.right;
  const bottom = height - margin.bottom;
  const x = (v) => Math.round(margin.left + ((v - 0.5) / 0.5) * (right - margin.left)) + 0.5;
  const y = (v) => Math.round(margin.top + ((17 - v) / 1.6) * (bottom - margin.top)) + 0.5;
  const xTicks = Array.from({ length: 101 }, (_, i) => i);
  const yTicks = Array.from({ length: 161 }, (_, i) => i);
  const hy = y(15.841);
  const mx = x(0.8943);

  return (
    <div ref={ref} className="min-h-0 min-w-0 flex-1 overflow-hidden">
      <svg width={width} height={height} className="block font-['DejaVu_Serif_Condensed','Liberation_Serif',serif]" fill="none" fontSize="13">
        <defs>
          <linearGradient id="track" x2="0" y2="1">
            <stop offset="0" stopColor="#333" />
            <stop offset=".5" stopColor="#808080" />
            <stop offset="1" stopColor="#2e2e2e" />
          </linearGradient>
          <linearGradient id="handle" x2="0" y2="1">
            <stop offset="0" stopColor="#fff" />
            <stop offset="1" stopColor="#98a2ac" />
          </linearGradient>
        </defs>

        <rect x={margin.left} y="3" width={right - margin.left} height="24" fill="url(#track)" />
        <path d={`M${margin.left + 2} 14.500l6-3v6z M${right - 4} 14.500l-6-3v6z`} fill="#d00" />
        <rect x={margin.left + 12} y="1" width={right - margin.left - 25} height="29" rx="4" fill="url(#handle)" />
        <rect x={margin.left + 24} y="4" width={right - margin.left - 49} height="23" rx="3" fill="url(#track)" />
        <path d={`M${margin.left + 17.5} 8v14M${margin.left + 20.5} 8v14M${right - 20.5} 8v14M${right - 17.5} 8v14`} stroke="#000" />
        <path d={`M${margin.left + 25} 8.500L${right - 26} 20.500`} stroke="#e00000" shapeRendering="crispEdges" />

        <g shapeRendering="crispEdges">
          {xTicks.filter((i) => i % 2 === 0).map((i) => (
            <path key={i} d={`M${x(0.5 + i / 200)} ${margin.top}V${bottom}`} stroke={i % 10 ? '#333' : '#5a5a5a'} strokeDasharray={i % 10 ? '1 3' : '1 2'} />
          ))}
          {yTicks.filter((i) => i % 5 === 0).map((i) => (
            <path key={i} d={`M${margin.left} ${y(17 - i / 100)}H${right}`} stroke={i % 10 ? '#333' : '#5a5a5a'} strokeDasharray={i % 10 ? '1 3' : '1 2'} />
          ))}
          <path d={`M${margin.left - 8.5} ${margin.top}V${bottom + 2}M${margin.left} ${bottom + 7.5}H${right + 1}`} stroke="#fff" />
          {yTicks.map((i) => {
            const length = i % 10 === 0 ? 12 : i % 5 === 0 ? 8 : 4;
            return <path key={i} d={`M${margin.left - 8 - length} ${y(17 - i / 100)}h${length}`} stroke="#fff" />;
          })}
          {xTicks.map((i) => {
            const length = i % 10 === 0 ? 12 : i % 2 === 0 ? 8 : 4;
            return <path key={i} d={`M${x(0.5 + i / 200)} ${bottom + 8}v${length}`} stroke="#fff" />;
          })}
          <path d={`M${margin.left} ${hy}H${right}`} stroke="#fff" strokeWidth="3" strokeDasharray="15 3" strokeDashoffset="1" />
          <polyline points={trace.map(([a, b]) => `${x(a)},${y(b)}`).join(' ')} stroke="#e00000" />
        </g>

        <g fill="#fff">
          {Array.from({ length: 17 }, (_, i) => (
            <text key={i} x={margin.left - 23} y={y(17 - i / 10) + 5} textAnchor="end">
              {(17 - i / 10).toFixed(1)}
            </text>
          ))}
          {['0.5', '0.55', '0.6', '0.65', '0.7', '0.75', '0.8', '0.85', '0.9', '0.95', '1.0'].map((label) => (
            <text key={label} x={x(Number(label))} y={bottom + 37} textAnchor="middle">
              {label}
            </text>
          ))}
          <text x={(margin.left + right) / 2} y={bottom + 53} textAnchor="middle">R1 (k)</text>
          <text transform={`translate(15 ${(margin.top + bottom) / 2}) rotate(-90)`} textAnchor="middle">A (u)</text>
        </g>

        <rect x={margin.left + 2} y={hy + 7} width="69" height="21" rx="4" fill="#808080" />
        <text x={margin.left + 7} y={hy + 22} fill="#fff">15.83823u</text>

        <path d={`M${mx + 2} ${hy - 11}h-1q-5 0-5-5v-8q0-5 5-5h62q5 0 5 5v8q0 5-5 5h-43l-20 10z`} fill="#000" stroke="#666" />
        <circle cx={mx + 5} cy={hy - 20} r="4.500" fill="#e00000" />
        <text x={mx + 14} y={hy - 15} fill="#fff">894.256</text>

        <rect x={right - 25} y={hy - 24} width="25" height="25" rx="2" fill="#ededed" stroke="#fff" />
        <text x={right - 12} y={hy - 6} fill="#222" textAnchor="middle">H1</text>
      </svg>
    </div>
  );
}

function GraphWindow() {
  return (
    <main className="flex min-w-0 flex-1 flex-col pt-0.5">
      <div className="flex h-8 w-[146px] items-center border-t-2 border-r border-t-[#cc0000] border-r-[#aaa] bg-[#f0f0f0] pl-2">
        <Icon name="graphWindow" className="size-4" />
        <span className="ml-[5px]">Window 27</span>
        <button type="button" aria-label="Close tab" className="ml-1 flex">
          <svg viewBox="0 0 8 8" className="size-2">
            <path d="M1 1l6 6M7 1L1 7" stroke="#999" strokeWidth="1.500" />
          </svg>
        </button>
      </div>
      <div className="mt-0.5 mr-px mb-0.5 ml-0.5 flex min-h-0 flex-1 flex-col border-2 border-[#cc0000] bg-black outline outline-white">
        <div className="flex h-[23px] shrink-0 justify-between overflow-hidden border border-b-0 border-white pr-1 pl-px font-['DejaVu_Serif_Condensed','Liberation_Serif',serif] text-[13px] leading-[18px] text-white">
          <p className="w-[200px]">DC Analysis `dc': R1 = (500 -&gt;<br />1.0 K)</p>
          <span>1</span>
        </div>
        <div className="flex min-h-0 flex-1 border border-t-0 border-white">
          <section className="w-[137px] shrink-0 border-r border-[#999] text-white">
            <div className="flex h-5 overflow-hidden bg-linear-to-b from-[#c4c4c4] to-[#9c9c9c] leading-7 text-[#222]">
              <span className="w-[104px] border-r border-[#777]">Name</span>
              <span className="flex-1 border-r border-[#777] pl-[3px]">Vis</span>
            </div>
            <div className="mt-[18px] flex h-[26px] items-center pl-[3px]">
              <span className="mb-3 h-3.5 w-1.5 border-b border-l border-dotted border-[#777]" />
              <span className="ml-[3px] h-2.5 w-[15px] bg-[#e00000]" />
              <span className="ml-[6px] flex-1">R0:i</span>
              <Icon name="eye" className="mr-[13px] size-3.5" />
            </div>
          </section>
          <Chart />
        </div>
      </div>
    </main>
  );
}

export default function App() {
  return (
    <div className="flex h-screen flex-col overflow-hidden bg-[#efefef] font-['Noto_Sans',sans-serif] text-[18px] leading-6 text-black">
      <Taskbar />
      <TitleBar />
      <MenuBar />
      <Toolbars />
      <div className="flex min-h-0 flex-1">
        <Browser />
        <div className="w-[5px] shrink-0 bg-[#cfd0d6]" />
        <GraphWindow />
      </div>
      <div className="flex h-7 shrink-0 items-center border-b border-[#8c8c8c] bg-linear-to-b from-[#ececec] to-[#b8b8b8] pr-[11px] pl-[3px]">
        <Grip />
        <span className="flex-1">mouse L:</span>
        <span>M:</span>
        <span className="flex-1 text-right">R:</span>
      </div>
      <footer className="flex h-8 shrink-0 items-center border-b border-[#555] bg-[#f0f0f0] pr-1">
        <div className="flex flex-1 items-center">
          <span className="flex h-[30px] w-[61px] items-center border-r border-[#555] bg-[#f6d8d8] pl-1">24(62)</span>
          <span className="pl-2.5">no error</span>
        </div>
        <span className="pt-2 font-['Liberation_Sans_Narrow','Roboto',sans-serif] text-[13px] font-bold text-[#003838]">bbs.eetop.cn</span>
        <div className="flex flex-1 justify-end">
          <span className="h-6 w-2 border-y-4 border-r border-l-2 border-[#555] border-y-[#eee] bg-[#a0a0a8]" />
        </div>
      </footer>
    </div>
  );
}
